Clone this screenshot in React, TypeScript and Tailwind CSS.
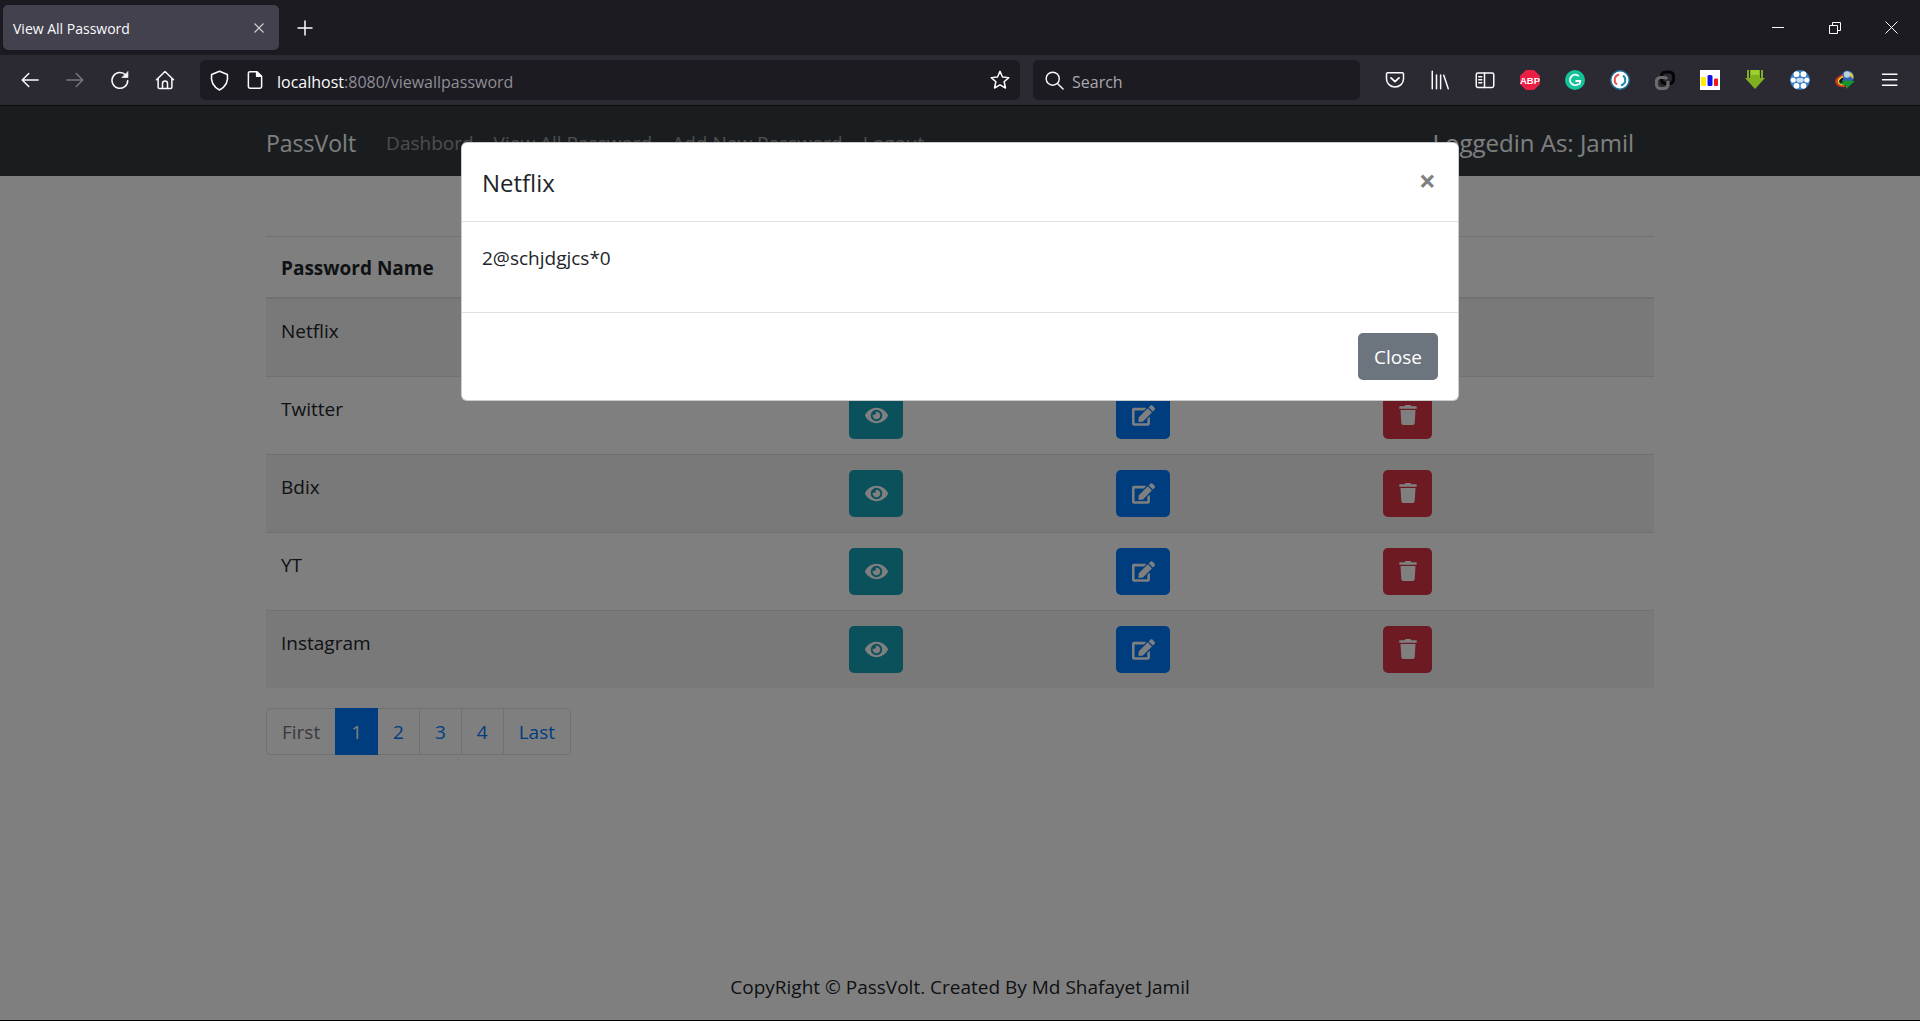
import React, { useState } from "react";
import { FaEye, FaEdit, FaTrash } from "react-icons/fa";

const names = ["Netflix", "Twitter", "Bdix", "YT", "Instagram"];

function Ico({ children, size = 20 }: { children: React.ReactNode; size?: number }) {
  return (
    <svg width={size} height={size} viewBox="0 0 16 16" fill="none" stroke="currentColor" strokeWidth="1.2" strokeLinecap="round" strokeLinejoin="round" aria-hidden="true">
      {children}
    </svg>
  );
}

function ToolButton({ label, children, dim = false }: { label: string; children: React.ReactNode; dim?: boolean }) {
  return (
    <button type="button" aria-label={label} className={dim ? "flex h-10 w-[45px] items-center justify-center text-[#77767d]" : "flex h-10 w-[45px] items-center justify-center text-[#fbfbfe]"}>
      {children}
    </button>
  );
}

function TabStrip() {
  return (
    <div className="flex h-[55px] items-center justify-between bg-[#1c1b22] text-[#fbfbfe]">
      <div className="flex items-center">
        <div className="ml-[3px] flex h-[45px] w-[276px] items-center justify-between rounded-[5px] bg-[#42414d] pr-3 pl-2.5 shadow">
          <span className="pt-0.5 text-[14px]">View All Password</span>
          <button type="button" aria-label="Close tab" className="flex h-4 w-4 items-center justify-center">
            <svg width="10" height="10" viewBox="0 0 10 10" stroke="#d0d0d6" strokeWidth="1.1"><path d="M.5.5l9 9M9.5.5l-9 9" /></svg>
          </button>
        </div>
        <button type="button" aria-label="New tab" className="ml-[18px] flex h-4 w-4 items-center justify-center">
          <svg width="16" height="16" viewBox="0 0 16 16" stroke="currentColor" strokeWidth="1.5"><path d="M8 .5v15M.5 8h15" /></svg>
        </button>
      </div>
      <div className="flex">
        <button type="button" aria-label="Minimize" className="flex h-9 w-[57px] items-center justify-center">
          <svg width="12" height="12" viewBox="0 0 12 12" stroke="currentColor"><path d="M0 5.5h12" /></svg>
        </button>
        <button type="button" aria-label="Restore" className="flex h-9 w-[57px] items-center justify-center">
          <svg width="12" height="12" viewBox="0 0 12 12" fill="none" stroke="currentColor"><path d="M.5 3.5h8v8h-8zM3.5 3.5v-3h8v8h-3" /></svg>
        </button>
        <button type="button" aria-label="Close window" className="flex h-9 w-[57px] items-center justify-center">
          <svg width="13" height="13" viewBox="0 0 13 13" stroke="currentColor"><path d="M.5.5l12 12M12.5.5l-12 12" /></svg>
        </button>
      </div>
    </div>
  );
}

function Extensions() {
  return (
    <div className="flex items-center">
      <ToolButton label="Save to Pocket">
        <Ico><path d="M2.2 2.2h11.6a1 1 0 011 1v4a6.8 6.4 0 01-13.600 0v-4a1 1 0 011-1z" /><path d="M4.800 6.300L8 9.300l3.200-3" strokeWidth="1.5" /></Ico>
      </ToolButton>
      <ToolButton label="Library">
        <Ico><path d="M1.800 1v14M5.200 4v11M8.500 4v11M11 4.200L14.600 15" /></Ico>
      </ToolButton>
      <ToolButton label="Sidebars">
        <Ico><rect x="1" y="2.300" width="14" height="11.600" rx="1.300" /><path d="M7.600 2.300v11.600M3 5.300h2.400M3 7.700h2.400M3 10.100h2.400" /></Ico>
      </ToolButton>
      <ToolButton label="Adblock Plus">
        <svg width="20" height="20" viewBox="0 0 20 20"><path d="M6 0h8l6 6v8l-6 6H6l-6-6V6z" fill="#ed1e45" /><text x="10" y="13.500" textAnchor="middle" fontSize="9.500" fontWeight="700" fontFamily="Liberation Sans" fill="#fff">ABP</text></svg>
      </ToolButton>
      <ToolButton label="Grammarly">
        <svg width="20" height="20" viewBox="0 0 20 20"><circle cx="10" cy="10" r="10" fill="#15c39a" /><path d="M13.800 6.200A5.200 5.200 0 1013.500 14M10.500 11h4.700l-.8 3.800" fill="none" stroke="#fff" strokeWidth="1.800" /></svg>
      </ToolButton>
      <ToolButton label="Session helper">
        <svg width="20" height="20" viewBox="0 0 20 20" fill="none"><circle cx="10" cy="10" r="9.200" fill="#fff" stroke="#1e7196" strokeWidth="1.500" /><path d="M9 4.500a5.600 5.600 0 00-2 10" stroke="#e0574a" strokeWidth="2" /><path d="M11 15.500a5.600 5.600 0 002-10" stroke="#2388b5" strokeWidth="2" /></svg>
      </ToolButton>
      <ToolButton label="Link tool">
        <svg width="20" height="20" viewBox="0 0 20 20" fill="none" strokeWidth="3.200"><rect x="6.500" y="2" width="12" height="11.500" rx="4" stroke="#050505" /><path d="M13 11v3.500a4 4 0 01-4 4H5.500a4 4 0 01-4-4V11.500a4 4 0 014-4H9a4 4 0 013 1.500" stroke="#6b6b70" /></svg>
      </ToolButton>
      <ToolButton label="Statistics">
        <svg width="20" height="20" viewBox="0 0 20 20"><path fill="#fff" d="M0 0h20v20H0z" /><rect x="1" y="7" width="5" height="9" rx="1" fill="#ffec00" /><rect x="7.500" y="5" width="5" height="11" rx="1.500" fill="#1010ee" /><rect x="14" y="8.500" width="4" height="7.500" rx="1" fill="#f01818" /></svg>
      </ToolButton>
      <ToolButton label="Downloader">
        <svg width="20" height="20" viewBox="0 0 20 20"><path d="M2 0h2v8h1V0h10v8h1V0h2v8h2l-10 11L0 8h2z" fill="#7fb01e" /><path d="M6 0h8v5H6z" fill="#9bd02f" /></svg>
      </ToolButton>
      <ToolButton label="Football">
        <svg width="20" height="20" viewBox="0 0 20 20"><circle cx="10" cy="10" r="10" fill="#3a7fc4" /><g fill="#fff"><path d="M7.500 8h5l1.500 2-1.500 2.500h-5L6 10z" opacity=".75" /><circle cx="6.500" cy="4.200" r="2.900" /><circle cx="13.500" cy="4.200" r="2.900" /><circle cx="3.200" cy="10" r="2.600" /><circle cx="16.800" cy="10" r="2.600" /><circle cx="6.500" cy="15.800" r="2.900" /><circle cx="13.500" cy="15.800" r="2.900" /></g></svg>
      </ToolButton>
      <ToolButton label="Download manager">
        <svg width="20" height="20" viewBox="0 0 20 20" fill="none"><circle cx="12.500" cy="7" r="6.500" fill="#2f62b5" /><circle cx="12" cy="4.500" r="3.200" fill="#b8cfe0" /><path d="M15 2a6 6 0 013 7l-3-3z" fill="#d8c83c" /><path d="M8 5C3 7 0 10 1.500 13s6 4 9 3" stroke="#e03020" strokeWidth="1.800" /><path d="M8 6.500C4 8.500 2.500 10.500 3.500 12.500s4 2.500 6 2" stroke="#f2c91c" strokeWidth="1.600" /><path d="M8 8.500C5.500 10 5 11.500 6 12.500" stroke="#111" strokeWidth="1.500" /><path d="M7 10.500l13 .5-9 8v-4c-3 0-5-.5-7-2.500 2 .5 4 .3 5-.5z" fill="#16962a" /></svg>
      </ToolButton>
      <ToolButton label="Application menu">
        <Ico><path d="M2 3.300h11.500M2 7.700h11.500M2 12.100h11.500" /></Ico>
      </ToolButton>
    </div>
  );
}

function Toolbar() {
  return (
    <div className="flex h-[51px] items-center border-b border-[#0c0c0d] bg-[#2b2a33] pr-2 pl-[7px]">
      <ToolButton label="Back"><Ico><path d="M14.500 8H2M7 2.800L1.800 8 7 13.200" /></Ico></ToolButton>
      <ToolButton label="Forward" dim><Ico><path d="M1.500 8H14M9 2.800L14.200 8 9 13.200" /></Ico></ToolButton>
      <ToolButton label="Reload"><Ico><path d="M14.200 8.500A6.300 6.300 0 1112.500 4" /><path d="M14.300 1.500V6H9.800z" fill="currentColor" strokeWidth=".6" /></Ico></ToolButton>
      <ToolButton label="Home"><Ico><path d="M1.200 7.800L8 1.200l6.800 6.600M2.500 7v6.700a1 1 0 001 1h9a1 1 0 001-1V7M6 14.700V10.800a2 2 0 014 0v3.900" /></Ico></ToolButton>
      <div className="ml-[13px] flex h-10 w-0 grow-[801] items-center rounded-[5px] bg-[#1c1b22] pr-2.5 pl-[9px] text-[#fbfbfe]">
        <Ico size={21}><path d="M8 1l6 2.400c.8 5-1 9.300-6 11.800C3 12.700 1.200 8.400 2 3.400z" /></Ico>
        <span className="ml-[15px] flex"><Ico><path d="M4 1.300h5.300L13.300 5v8.200a1.300 1.300 0 01-1.300 1.300H4a1.300 1.300 0 01-1.300-1.300V2.600A1.300 1.300 0 014 1.300z" /><path d="M9.300 1.500V5H13z" fill="currentColor" /></Ico></span>
        <p className="ml-3 grow pt-[3px] text-[16px] text-[#8f8e96]"><span className="text-[#fbfbfe]">localhost</span>:8080/viewallpassword</p>
        <button type="button" aria-label="Bookmark this page"><Ico><path d="M8 1.100l2 4.500 5 .5-3.700 3.300 1.100 5L8 11.900l-4.400 2.500 1.100-5L1 6.100l5-.5z" /></Ico></button>
      </div>
      <label className="ml-[13px] flex h-10 w-0 grow-[315] items-center rounded-[5px] bg-[#1c1b22] pl-3 text-[#fbfbfe]">
        <Ico size={19}><circle cx="6.500" cy="6.500" r="5.500" /><path d="M10.700 10.700L15.200 15.200" /></Ico>
        <input type="text" placeholder="Search" aria-label="Search" className="ml-2 min-w-0 grow bg-transparent pt-[3px] text-[16px] outline-none placeholder:text-[#a9a8ae]" />
      </label>
      <div className="ml-3"><Extensions /></div>
    </div>
  );
}

const pageBase = "flex h-[47px] items-center border-y border-r border-[#dee2e6] px-[15px]";
const cell = "px-[15px] py-[15px]";

export default function App() {
  const [open, setOpen] = useState(true);
  return (
    <div className="flex min-h-screen flex-col font-['Open_Sans','Noto_Sans',sans-serif]">
      <TabStrip />
      <Toolbar />
      <div className="relative flex grow flex-col border-b border-black bg-white text-[19px] leading-[30px] text-[#212529]">
        <nav className="bg-[#343a40]">
          <div className="mx-auto flex h-[70px] w-full max-w-[1388px] items-center pt-[3px]">
            <a href="#home" className="text-[23px] text-white">PassVolt</a>
            <div className="ml-[30px] flex grow gap-5 text-white/50">
              <a href="#dashboard">Dashbord</a>
              <a href="#all">View All Password</a>
              <a href="#add">Add New Password</a>
              <a href="#logout">Logout</a>
            </div>
            <span className="mr-5 text-[24px] text-white">Loggedin As: Jamil</span>
          </div>
        </nav>
        <main className="mx-auto w-full max-w-[1388px] grow pt-[60px]">
          <table className="w-full table-fixed border-collapse text-left">
            <colgroup><col /><col className="w-[267px]" /><col className="w-[267px]" /><col className="w-[286px]" /></colgroup>
            <thead>
              <tr className="h-[61px] border-t border-b-2 border-[#dee2e6]">
                <th scope="col" className="px-[15px] pt-[3px] font-bold">Password Name</th>
                <th scope="col" className="px-[15px]">View</th>
                <th scope="col" className="px-[15px]">Edit</th>
                <th scope="col" className="px-[15px]">Delete</th>
              </tr>
            </thead>
            <tbody>
              {names.map((n) => (
                <tr key={n} className="h-[78px] border-t border-[#dee2e6] align-top odd:bg-[#f2f2f2]">
                  <td className="px-[15px] pt-[17px]">{n}</td>
                  <td className={cell}><button type="button" aria-label={"View " + n} className="flex h-[47px] w-[54px] items-center justify-center rounded-[5px] bg-[#17a2b8] text-white"><FaEye size={23} /></button></td>
                  <td className={cell}><button type="button" aria-label={"Edit " + n} className="flex h-[47px] w-[54px] items-center justify-center rounded-[5px] bg-[#007bff] text-white"><FaEdit size={23} /></button></td>
                  <td className={cell}><button type="button" aria-label={"Delete " + n} className="flex h-[47px] w-[49px] items-center justify-center rounded-[5px] bg-[#dc3545] text-white"><FaTrash size={20} /></button></td>
                </tr>
              ))}
            </tbody>
          </table>
          <div className="mt-5 flex text-[#007bff]">
            <span className="flex h-[47px] items-center rounded-l-[5px] border border-r-0 border-[#dee2e6] px-[15px] text-[#6c757d]">First</span>
            <a href="#1" className="flex h-[47px] items-center bg-[#007bff] px-4 text-white">1</a>
            <a href="#2" className={pageBase}>2</a>
            <a href="#3" className={pageBase}>3</a>
            <a href="#4" className={pageBase}>4</a>
            <a href="#last" className={pageBase + " rounded-r-[5px]"}>Last</a>
          </div>
        </main>
        <footer className="pb-[18px] text-center">CopyRight © PassVolt. Created By Md Shafayet Jamil</footer>
        {open && (
          <div className="absolute inset-0 bg-black/50">
            <div role="dialog" aria-modal="true" aria-labelledby="dialog-title" className="mx-auto mt-9 w-full max-w-[998px] rounded-md border border-black/20 bg-white">
              <div className="flex h-[79px] items-start justify-between border-b border-[#dee2e6] p-5">
                <h5 id="dialog-title" className="text-[24px] leading-[40px]">Netflix</h5>
                <button type="button" aria-label="Close" onClick={() => setOpen(false)} className="mr-0.5 text-[30px] leading-[36px] font-bold text-black/50">×</button>
              </div>
              <p className="border-b border-[#dee2e6] px-5 pt-[21px] pb-[39px]">2@schjdgjcs*0</p>
              <div className="flex justify-end p-5">
                <button type="button" onClick={() => setOpen(false)} className="h-[47px] rounded-[5px] bg-[#6c757d] px-4 text-white">Close</button>
              </div>
            </div>
          </div>
        )}
      </div>
    </div>
  );
}
